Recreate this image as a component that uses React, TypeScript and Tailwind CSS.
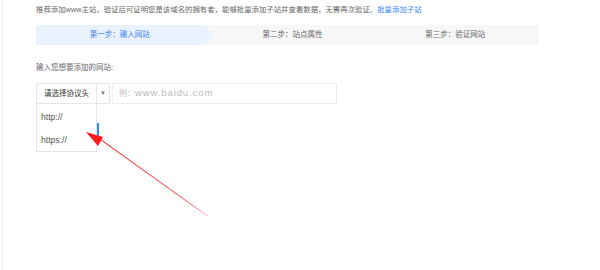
import React from "react";

const font = { fontFamily: '"Liberation Sans", "Noto Sans CJK SC", sans-serif' };

export default function App() {
  return (
    <div className="relative w-[600px] h-[270px] bg-white overflow-hidden" style={font}>
      <div className="ml-[2px] h-full border-l border-[#eeeeee] pl-[33px] pt-[5px]">
        {/* 提示 */}
        <p className="text-[7.4px] leading-[10px] text-[#666666]">
          推荐添加www主站，验证后可证明您是该域名的拥有者，能够批量添加子站并查看数据，无需再次验证。
          <span className="text-[#3385ff]">批量添加子站</span>
        </p>

        {/* 步骤条 */}
        <div className="mt-[10px] grid grid-cols-3 w-[503px] h-[20px] bg-[#f7f7f7] text-[7.5px] text-[#666666]">
          <div className="relative flex items-center justify-center bg-[#eaf2ff] text-[#3b7ff4]">
            第一步：输入网站
            <span className="absolute right-[-10px] top-0 w-0 h-0 border-y-[10px] border-y-transparent border-l-[10px] border-l-[#eaf2ff]" />
          </div>
          <div className="flex items-center justify-center pl-[10px]">第二步：站点属性</div>
          <div className="flex items-center justify-center">第三步：验证网站</div>
        </div>

        <p className="mt-[18px] text-[7.5px] leading-[10px] text-[#666666]">输入您想要添加的网站:</p>

        {/* 表单 */}
        <div className="mt-[10px] flex gap-[2px]">
          <div className="relative">
            <div className="flex w-[74px] h-[21px] border border-[#e6e6e6] bg-white">
              <div className="w-[60px] flex items-center justify-center border-r border-[#e6e6e6] text-[7.5px] text-[#333333]">
                请选择协议头
              </div>
              <div className="flex-1 flex items-center justify-center text-[6px] text-[#777777]">▼</div>
            </div>
            <div className="relative w-[61px] h-[48px] border border-t-0 border-[#e6e6e6] bg-white text-[8.6px] text-[#555555]">
              <div className="h-[25px] flex items-center pl-[4px] pt-[2px]">http://</div>
              <div className="h-[23px] flex items-center pl-[4px]">https://</div>
              <span className="absolute left-[60px] top-[19px] w-[2px] h-[15px] bg-[#3385ff]" />
            </div>
          </div>
          <div className="w-[225px] h-[21px] border border-[#eeeeee] flex items-center pl-[6px] text-[#bbbbbb]">
            <span className="text-[8px]">例：</span>
            <span className="text-[9.5px] tracking-[0.9px]">www.baidu.com</span>
          </div>
        </div>
      </div>

      {/* 红色箭头 */}
      <svg className="absolute left-0 top-0" width="600" height="270" viewBox="0 0 600 270">
        <defs>
          <linearGradient id="fade" x1="86" y1="133" x2="208" y2="216" gradientUnits="userSpaceOnUse">
            <stop offset="0.8" stopColor="#ff1a1a" />
            <stop offset="1" stopColor="#ff9a9a" />
          </linearGradient>
        </defs>
        <polygon points="86,132 103,137 98,146" fill="#ff1a1a" />
        <polygon points="99,139 102,140 208,216 207,216" fill="url(#fade)" />
      </svg>
    </div>
  );
}
